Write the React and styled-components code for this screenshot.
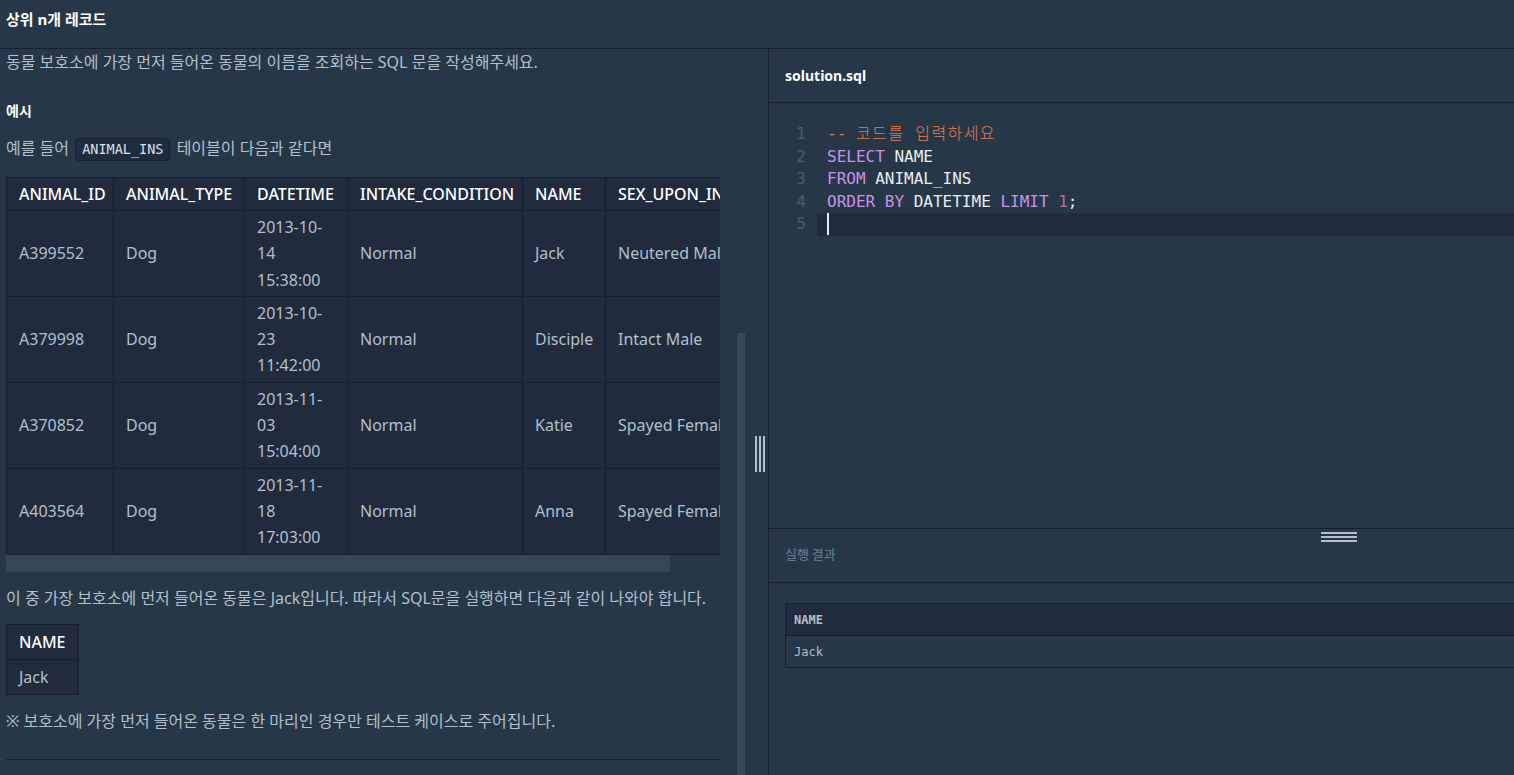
import React from "react";
import styled, { createGlobalStyle } from "styled-components";

const GlobalStyle = createGlobalStyle`
  html, body { margin: 0; padding: 0; background: #263747; }
  body {
    font-family: "Noto Sans", "Noto Sans CJK KR", sans-serif;
    color: #b2c0cc;
    overflow: hidden;
  }
`;

const rows = [
  ["A399552", "Dog", "2013-10-14 15:38:00", "Normal", "Jack", "Neutered Male"],
  ["A379998", "Dog", "2013-10-23 11:42:00", "Normal", "Disciple", "Intact Male"],
  ["A370852", "Dog", "2013-11-03 15:04:00", "Normal", "Katie", "Spayed Female"],
  ["A403564", "Dog", "2013-11-18 17:03:00", "Normal", "Anna", "Spayed Female"],
];
const headers = ["ANIMAL_ID", "ANIMAL_TYPE", "DATETIME", "INTAKE_CONDITION", "NAME", "SEX_UPON_INTAKE"];
const colWidths = [107, 131, 103, 175, 83, 170];

const App = () => {
  return (
    <Page>
      <GlobalStyle />
      <TitleBar>상위 n개 레코드</TitleBar>
      <Split>
        <LeftPanel>
          <Content>
            <Desc>동물 보호소에 가장 먼저 들어온 동물의 이름을 조회하는 SQL 문을 작성해주세요.</Desc>
            <SubTitle>예시</SubTitle>
            <Desc>
              예를 들어 <Code>ANIMAL_INS</Code> 테이블이 다음과 같다면
            </Desc>
            <TableScroll>
              <Table width={769}>
                <colgroup>
                  {colWidths.map((w, i) => (
                    <col key={i} style={{ width: w }} />
                  ))}
                </colgroup>
                <thead>
                  <tr>
                    {headers.map((h) => (
                      <Th key={h}>{h}</Th>
                    ))}
                  </tr>
                </thead>
                <tbody>
                  {rows.map((r) => (
                    <tr key={r[0]}>
                      {r.map((c, i) => (
                        <Td key={i}>{c}</Td>
                      ))}
                    </tr>
                  ))}
                </tbody>
              </Table>
            </TableScroll>
            <HScroll>
              <HThumb />
            </HScroll>
            <Desc spaced>이 중 가장 보호소에 먼저 들어온 동물은 Jack입니다. 따라서 SQL문을 실행하면 다음과 같이 나와야 합니다.</Desc>
            <SmallTable>
              <thead>
                <tr>
                  <Th roomy>NAME</Th>
                </tr>
              </thead>
              <tbody>
                <tr>
                  <Td roomy>Jack</Td>
                </tr>
              </tbody>
            </SmallTable>
            <Desc spaced>※ 보호소에 가장 먼저 들어온 동물은 한 마리인 경우만 테스트 케이스로 주어집니다.</Desc>
            <Rule />
          </Content>
          <VScroll />
          <ColHandle>
            <span />
            <span />
            <span />
          </ColHandle>
        </LeftPanel>

        <RightPanel>
          <FileTab>solution.sql</FileTab>
          <Editor>
            <Line>
              <Num>1</Num>
              <CodeText>
                <Comment>-- <Hangul>코드를 입력하세요</Hangul></Comment>
              </CodeText>
            </Line>
            <Line>
              <Num>2</Num>
              <CodeText><Kw>SELECT</Kw> NAME</CodeText>
            </Line>
            <Line>
              <Num>3</Num>
              <CodeText><Kw>FROM</Kw> ANIMAL_INS</CodeText>
            </Line>
            <Line>
              <Num>4</Num>
              <CodeText>
                <Kw>ORDER BY</Kw> DATETIME <Kw>LIMIT</Kw> <NumLit>1</NumLit>;
              </CodeText>
            </Line>
            <Line active>
              <Num>5</Num>
              <CodeText><Cursor /></CodeText>
            </Line>
          </Editor>
          <ResultHeader>
            실행 결과
            <RowHandle>
              <span />
              <span />
              <span />
            </RowHandle>
          </ResultHeader>
          <ResultBody>
            <ResultTable>
              <thead>
                <tr>
                  <RTh>NAME</RTh>
                </tr>
              </thead>
              <tbody>
                <tr>
                  <RTd>Jack</RTd>
                </tr>
              </tbody>
            </ResultTable>
          </ResultBody>
        </RightPanel>
      </Split>
    </Page>
  );
};
export default App;

const Page = styled.div`
  width: 1514px;
  height: 775px;
  display: flex;
  flex-direction: column;
  overflow: hidden;
  background: #263747;
`;

const TitleBar = styled.div`
  height: 49px;
  flex-shrink: 0;
  display: flex;
  align-items: center;
  padding: 0 6px 12px;
  box-sizing: border-box;
  border-bottom: 1px solid #172030;
  color: #ffffff;
  font-size: 15px;
  font-weight: 700;
`;

const Split = styled.div`
  flex: 1;
  display: flex;
  min-height: 0;
`;

const LeftPanel = styled.div`
  position: relative;
  width: 768px;
  flex-shrink: 0;
  border-right: 1px solid #172030;
  overflow: hidden;
`;

const Content = styled.div`
  width: 714px;
  padding-left: 6px;
`;

const Desc = styled.p`
  margin: ${(p) => (p.spaced ? "13px 0 13px" : "0")};
  font-size: 16px;
  line-height: 26px;
  color: #b2c0cc;
`;

const SubTitle = styled.h5`
  margin: 24px 0 12px;
  font-size: 14px;
  line-height: 24px;
  font-weight: 700;
  color: #ffffff;
`;

const Code = styled.code`
  display: inline-block;
  font-family: "DejaVu Sans Mono", monospace;
  font-size: 13.5px;
  line-height: 21px;
  padding: 0 6px;
  margin: 0 2px;
  background: #202b3d;
  border: 1px solid #172030;
  border-radius: 4px;
  color: #d7e2eb;
`;

const TableScroll = styled.div`
  margin-top: 16px;
  width: 714px;
  overflow: hidden;
`;

const Table = styled.table`
  width: ${(p) => p.width}px;
  table-layout: fixed;
  border-collapse: collapse;
  background: #202b3d;
`;

const Th = styled.th`
  text-align: left;
  font-weight: 500;
  font-size: 16px;
  line-height: 26px;
  padding: ${(p) => (p.roomy ? "4px 12px" : "3px 12px")};
  color: #ffffff;
  border: 1px solid #172030;
  white-space: nowrap;
  overflow: hidden;
`;

const Td = styled.td`
  font-size: 16px;
  line-height: ${(p) => (p.roomy ? "26px" : "26.3px")};
  padding: ${(p) => (p.roomy ? "4px 12px" : "3px 12px")};
  color: #b2c0cc;
  border: 1px solid #172030;
  overflow: hidden;
  white-space: normal;
  word-break: normal;
`;

const HScroll = styled.div`
  width: 714px;
  height: 17px;
`;

const HThumb = styled.div`
  width: 664px;
  height: 100%;
  background: #37475a;
`;

const SmallTable = styled.table`
  border-collapse: collapse;
  background: #202b3d;
`;

const Rule = styled.hr`
  margin: 25px 0 0;
  border: none;
  border-top: 1px solid #172030;
`;

const VScroll = styled.div`
  position: absolute;
  left: 737px;
  top: 284px;
  width: 8px;
  bottom: 0;
  background: #37475a;
`;

const ColHandle = styled.div`
  position: absolute;
  left: 755px;
  top: 387px;
  height: 36px;
  display: flex;
  gap: 2.5px;
  span {
    width: 1.5px;
    background: #b2c0cc;
  }
`;

const RightPanel = styled.div`
  flex: 1;
  display: flex;
  flex-direction: column;
  overflow: hidden;
`;

const FileTab = styled.div`
  height: 54px;
  flex-shrink: 0;
  box-sizing: border-box;
  border-bottom: 1px solid #172030;
  display: flex;
  align-items: center;
  padding-left: 16px;
  color: #ffffff;
  font-size: 14px;
  font-weight: 700;
`;

const Editor = styled.div`
  height: 426px;
  flex-shrink: 0;
  box-sizing: border-box;
  padding-top: 20px;
  border-bottom: 1px solid #172030;
  font-family: "DejaVu Sans Mono", "Noto Sans CJK KR", monospace;
  font-size: 16px;
`;

const Line = styled.div`
  display: flex;
  height: 22.5px;
  line-height: 22.5px;
  & > div:last-child {
    background: ${(p) => (p.active ? "#202b3d" : "transparent")};
  }
`;

const Num = styled.span`
  width: 37px;
  flex-shrink: 0;
  text-align: right;
  color: #4a5d70;
`;

const CodeText = styled.div`
  flex: 1;
  margin-left: 11px;
  padding-left: 10px;
  color: #e7eef4;
  white-space: pre;
`;

const Comment = styled.span`
  color: #e97b4c;
`;

const Hangul = styled.span`
  font-weight: 300;
  letter-spacing: 1.4px;
`;

const Kw = styled.span`
  color: #c792ea;
`;

const NumLit = styled.span`
  color: #c3678f;
`;

const Cursor = styled.span`
  display: inline-block;
  width: 1.5px;
  height: 22px;
  vertical-align: top;
  background: #e7eef4;
`;

const ResultHeader = styled.div`
  position: relative;
  height: 54px;
  flex-shrink: 0;
  box-sizing: border-box;
  border-bottom: 1px solid #172030;
  display: flex;
  align-items: center;
  padding: 0 0 4px 16px;
  font-family: "Noto Sans CJK KR", sans-serif;
  font-size: 13px;
  font-weight: 500;
  color: #5f7689;
`;

const RowHandle = styled.div`
  position: absolute;
  left: 552px;
  top: 3px;
  width: 36px;
  display: flex;
  flex-direction: column;
  gap: 2px;
  span {
    height: 2px;
    background: #b2c0cc;
  }
`;

const ResultBody = styled.div`
  flex: 1;
  padding: 20px 0 0 16px;
`;

const ResultTable = styled.table`
  width: calc(100% + 10px);
  border-collapse: collapse;
  font-family: "DejaVu Sans Mono", monospace;
  font-size: 12px;
`;

const RTh = styled.th`
  text-align: left;
  height: 31px;
  padding: 0 8px;
  background: #202b3d;
  color: #b2c0cc;
  font-weight: 700;
  border: 1px solid #172030;
`;

const RTd = styled.td`
  height: 31px;
  padding: 0 8px;
  color: #b2c0cc;
  border: 1px solid #172030;
`;
